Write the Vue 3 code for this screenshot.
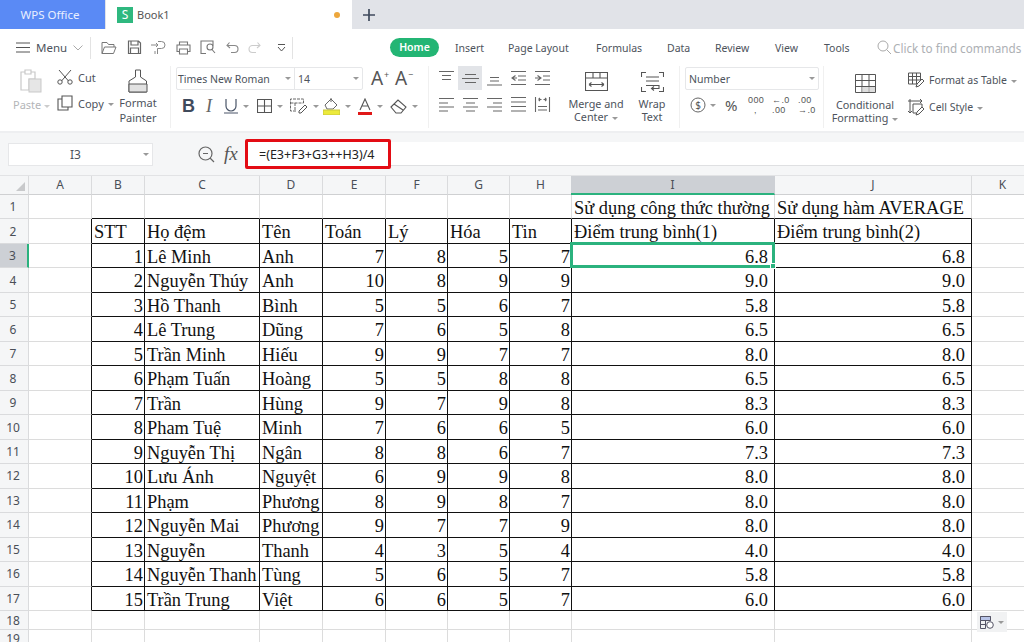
<script setup>
const columns = ['A','B','C','D','E','F','G','H','I','J','K']
const people = [
  ['1','Lê Minh','Anh','7','8','5','7','6.8'],
  ['2','Nguyễn Thúy','Anh','10','8','9','9','9.0'],
  ['3','Hồ Thanh','Bình','5','5','6','7','5.8'],
  ['4','Lê Trung','Dũng','7','6','5','8','6.5'],
  ['5','Trần Minh','Hiếu','9','9','7','7','8.0'],
  ['6','Phạm Tuấn','Hoàng','5','5','8','8','6.5'],
  ['7','Trần','Hùng','9','7','9','8','8.3'],
  ['8','Pham Tuệ','Minh','7','6','6','5','6.0'],
  ['9','Nguyễn Thị','Ngân','8','8','6','7','7.3'],
  ['10','Lưu Ánh','Nguyệt','6','9','9','8','8.0'],
  ['11','Phạm','Phương','8','9','8','7','8.0'],
  ['12','Nguyễn Mai','Phương','9','7','7','9','8.0'],
  ['13','Nguyễn','Thanh','4','3','5','4','4.0'],
  ['14','Nguyễn Thanh','Tùng','5','6','5','7','5.8'],
  ['15','Trần Trung','Việt','6','6','5','7','6.0']
]
const textLeft = new Set([1, 2])

const sheetRows = []
sheetRows.push({ n: 1, cells: ['', '', '', '', '', '', '', '', 'Sử dụng công thức thường', 'Sử dụng hàm AVERAGE', ''].map((t) => ({ t, left: true })), top: true })
sheetRows.push({ n: 2, cells: ['', 'STT', 'Họ đệm', 'Tên', 'Toán', 'Lý', 'Hóa', 'Tin', 'Điểm trung bình(1)', 'Điểm trung bình(2)', ''].map((t) => ({ t, left: true })) })
people.forEach((p, i) => {
  const cells = [{ t: '', left: true }]
  p.forEach((t, j) => cells.push({ t, left: textLeft.has(j) }))
  cells.push({ t: p[7], left: false })
  cells.push({ t: '', left: true })
  sheetRows.push({ n: i + 3, cells })
})
sheetRows.push({ n: 18, cells: columns.map(() => ({ t: '', left: true })) })
sheetRows.push({ n: 19, cells: columns.map(() => ({ t: '', left: true })) })

function cellClass(r, c) {
  const inCol = c >= 1 && c <= 9
  return {
    left: r.cells[c].left,
    right: !r.cells[c].left,
    dec: !r.cells[c].left && c >= 8,
    bR: r.n >= 2 && r.n <= 17 && c >= 0 && c <= 9,
    bB: r.n >= 1 && r.n <= 17 && inCol
  }
}

const alignIcons = [
  'M1 1.5h15M4 5.5h9M4 9.5h9',
  'M3 4.5h11M0 8.5h17M3 12.5h11',
  'M4 7.5h9M4 11h9M1 15h15',
  'M1 1.5h15M8 6h8M8 10h8M1 14.5h15M5.500 5.500L2 8l3.500 2.500M2 8h5',
  'M1 1.500h15M9 6h7M9 10h7M1 14.500h15M3.500 5.500L7 8l-3.500 2.500M1 8h6',
  'M1 2.500h15M1 7h9M1 11h15M1 15h9',
  'M1 2.500h15M4 7h9M1 11h15M4 15h9',
  'M1 2.500h15M7 7h9M1 11h15M7 15h9',
  'M1 1.500h15M1 6h15M1 10.500h15M1 15h15',
  'M1.500 1v15M15.500 1v15M4 10.500h9M4 14h9M4.500 3.500h3M4.500 3.500l1.500-1.500M4.500 3.500l1.500 1.500M12.500 3.500h-3M12.500 3.500L11 2M12.500 3.500L11 5'
]
</script>

<template>
  <div class="app">
    <header class="titlebar">
      <div class="wps">WPS Office</div>
      <div class="book">
        <span class="s-logo">S</span>
        <span class="book-name">Book1</span>
        <span class="dot"></span>
      </div>
      <div class="plus">
        <svg width="14" height="14" viewBox="0 0 14 14"><path d="M7 1v12M1 7h12" stroke="#3f4a5c" stroke-width="1.700" /></svg>
      </div>
    </header>

    <div class="quickrow">
      <svg class="burger" width="14" height="11" viewBox="0 0 14 11"><path d="M0 1h14M0 5.500h14M0 10h14" stroke="#555" stroke-width="1" /></svg>
      <span class="menu-label">Menu</span>
      <svg class="menu-chev" width="10" height="6" viewBox="0 0 10 6"><path d="M.5.500L5 5 9.500.500" fill="none" stroke="#aaa" /></svg>
      <i class="vsep first"></i>
      <div class="quick">
        <svg width="16" height="14" viewBox="0 0 16 14"><path d="M1 12.500V1.500h5l1.500 2H13V6M1 12.500h11.500L15 6H3.500L1 12.500z" fill="none" stroke="#777" /></svg>
        <svg width="15" height="15" viewBox="0 0 15 15"><path d="M1.500 1h10l2 2v10.500h-12zM4 1v4h7V1M3.500 13.500V8h8v5.500" fill="none" stroke="#666" stroke-width="1.200" /></svg>
        <svg width="15" height="15" viewBox="0 0 15 15"><path d="M0 5h7M5 3l2 2-2 2M7 1.500h3.500a3.500 3.500 0 0 1 0 7H6.500V14M4 11v3" fill="none" stroke="#888" /></svg>
        <svg width="15" height="14" viewBox="0 0 15 14"><path d="M3.500 4V1h8v3M3.500 10.500H1V4h13v6.500h-2.500M3.500 8h8v5h-8z" fill="none" stroke="#777" stroke-width="1.100" /></svg>
        <svg width="16" height="15" viewBox="0 0 16 15"><path d="M6 13.500H1V1h12v5M7 7a3 3 0 1 0 6 0 3 3 0 0 0-6 0M12 9.500l3 3.500" fill="none" stroke="#777" stroke-width="1.100" /></svg>
        <svg width="13" height="12" viewBox="0 0 13 12"><path d="M3.500.500L1 3.500l3 2.500M1.500 3.500h7a3.500 3.500 0 0 1 0 7H5" fill="none" stroke="#888" stroke-width="1.100" /></svg>
        <svg width="13" height="12" viewBox="0 0 13 12"><path d="M9.500.500L12 3.500 9 6M11.500 3.500h-7a3.500 3.500 0 0 0 0 7H8" fill="none" stroke="#ccc" stroke-width="1.100" /></svg>
        <svg class="more" width="9" height="8" viewBox="0 0 9 8"><path d="M1 .500h7M1 3l3.500 4L8 3" fill="none" stroke="#555" /></svg>
      </div>
      <i class="vsep second"></i>
      <nav class="tabs">
        <span class="home">Home</span>
        <span class="tab w53">Insert</span>
        <span class="tab w88">Page Layout</span>
        <span class="tab w71">Formulas</span>
        <span class="tab w48">Data</span>
        <span class="tab w60">Review</span>
        <span class="tab w49">View</span>
        <span class="tab w53">Tools</span>
      </nav>
      <div class="find">
        <svg width="15" height="15" viewBox="0 0 15 15"><circle cx="6" cy="6" r="5" fill="none" stroke="#aaa" /><path d="M9.500 9.500L14 14" stroke="#aaa" /></svg>
        <span>Click to find commands</span>
      </div>
    </div>

    <section class="ribbon">
      <div class="group g-clip">
        <div class="paste">
          <svg width="22" height="24" viewBox="0 0 22 24"><path d="M5 3H1v18h8V10h6V3h-4M5 1h6v4H5z" fill="none" stroke="#c9c9c9" stroke-width="1.200" /><rect x="9" y="10" width="12" height="13" fill="#e6e6e6" stroke="#c9c9c9" /></svg>
          <span class="paste-label">Paste<b class="caret"></b></span>
        </div>
        <div class="cutcopy">
          <div class="cc-item">
            <svg width="16" height="16" viewBox="0 0 16 16"><path d="M2 1l9.500 11M14 1L4.500 12" fill="none" stroke="#555" /><circle cx="3" cy="13" r="2.200" fill="none" stroke="#555" /><circle cx="13" cy="13" r="2.200" fill="none" stroke="#555" /></svg>
            <span>Cut</span>
          </div>
          <div class="cc-item">
            <svg width="16" height="16" viewBox="0 0 16 16"><path d="M5 1h10v11H5zM5 4H1v11h10v-3" fill="none" stroke="#555" stroke-width="1.100" /></svg>
            <span>Copy<b class="caret"></b></span>
          </div>
        </div>
        <div class="painter">
          <svg width="20" height="24" viewBox="0 0 20 24"><path d="M7.500 1h5v7l6 4v11H1V12l6.500-4z" fill="#fff" stroke="#555" /><path d="M1 15h18v8H1z" fill="#e2e2e2" stroke="#555" /></svg>
          <span>Format<br />Painter</span>
        </div>
      </div>
      <i class="ribsep"></i>

      <div class="group g-font">
        <div class="font-top">
          <div class="fontbox">
            <div class="fname">Times New Roman<b class="caret"></b></div>
            <div class="fsize">14<b class="caret"></b></div>
          </div>
          <div class="asize">A<sup>+</sup></div>
          <div class="asize">A<sup>−</sup></div>
        </div>
        <div class="font-bottom">
          <span class="fi w25 bold">B</span>
          <span class="fi w22 ital">I</span>
          <span class="fi w33">
            <svg width="14" height="15" viewBox="0 0 14 15"><path d="M2 0v7a5 5 0 0 0 10 0V0M0 14h14" fill="none" stroke="#4a5568" stroke-width="1.200" /></svg><b class="caret"></b>
          </span>
          <span class="fi w33">
            <svg width="15" height="14" viewBox="0 0 15 14"><path d="M.500.500h14v13H.500zM7.500.500v13M.500 7h14" fill="none" stroke="#555" stroke-width="1.100" /></svg><b class="caret"></b>
          </span>
          <span class="fi w33">
            <svg width="18" height="16" viewBox="0 0 18 16"><path d="M6 13H.500V1h13v4M.500 5h13M5 5v8" fill="none" stroke="#666" stroke-dasharray="3 1" /><path d="M9 13l6-6 2 2-6 6H9z" fill="none" stroke="#555" /></svg><b class="caret"></b>
          </span>
          <span class="fi w35">
            <svg width="17" height="18" viewBox="0 0 17 18"><path d="M2 8l6-6 6 6-4 4H4zM8 1v4" fill="none" stroke="#666" /><rect x="0" y="13" width="17" height="5" fill="#ecea3c" stroke="#c9c73a" /></svg><b class="caret"></b>
          </span>
          <span class="fi w32">
            <svg width="14" height="17" viewBox="0 0 14 17"><path d="M2 12L7 1l5 11M4 8h6" fill="none" stroke="#555" stroke-width="1.100" /><rect x="0" y="14" width="14" height="3" fill="#e01818" /></svg><b class="caret"></b>
          </span>
          <span class="fi w32">
            <svg width="17" height="15" viewBox="0 0 17 15"><path d="M1 8l7-7 8 7-5 6H6zM4 5l9 6" fill="none" stroke="#555" stroke-width="1.100" /></svg><b class="caret"></b>
          </span>
        </div>
      </div>
      <i class="ribsep"></i>

      <div class="group g-align">
        <div class="align-grid">
          <span v-for="(d, i) in alignIcons" :key="i" class="al" :class="{ on: i === 1 }">
            <svg width="17" height="17" viewBox="0 0 17 17"><path :d="d" fill="none" stroke="#666" stroke-width="1.100" /></svg>
          </span>
        </div>
        <div class="bigbtn merge">
          <svg width="23" height="20" viewBox="0 0 23 20"><path d="M.500.500h22v18H.500zM.500 6h22M8 .500V6M15 .500V6M4 12.500h15M4 12.500l2.500-2M4 12.500l2.500 2M19 12.500l-2.500-2M19 12.500l-2.500 2" fill="none" stroke="#555" stroke-width="1.100" /></svg>
          <span>Merge and<br />Center<b class="caret"></b></span>
        </div>
        <div class="bigbtn wrap">
          <svg width="23" height="20" viewBox="0 0 23 20"><path d="M5 .500H.500V5M18 .500h4.500V5M.500 15v4.500H5M22.500 15v4.500H18M5 5h13M5 9h13M5 13.500h13v3h-7M13 14.500l-2.500 2 2.500 2" fill="none" stroke="#555" stroke-width="1.100" /></svg>
          <span>Wrap<br />Text</span>
        </div>
      </div>
      <i class="ribsep"></i>

      <div class="group g-num">
        <div class="numbox">Number<b class="caret"></b></div>
        <div class="num-row">
          <span class="ni n1">
            <svg width="16" height="16" viewBox="0 0 16 16"><circle cx="8" cy="8" r="7" fill="none" stroke="#666" /><text x="8" y="11.500" text-anchor="middle" class="dollar">$</text></svg><b class="caret"></b>
          </span>
          <span class="ni n2 pct">%</span>
          <span class="ni n3 stack"><em>000</em><em class="comma">,</em></span>
          <span class="ni n4 stack"><em>←.0</em><em>.00</em></span>
          <span class="ni n5 stack"><em>.00</em><em>→.0</em></span>
        </div>
      </div>
      <i class="ribsep"></i>

      <div class="group g-styles">
        <div class="bigbtn cond">
          <svg width="21" height="19" viewBox="0 0 21 19"><path d="M.500.500h20v18H.500zM.500 6.500h20M.500 12.500h20M7 .500v18M14 .500v18" fill="none" stroke="#555" /><rect x="7.500" y="13" width="6" height="5" fill="#ddd" /><rect x="14.500" y="13" width="5.500" height="5" fill="#ddd" /></svg>
          <span>Conditional<br />Formatting<b class="caret"></b></span>
        </div>
        <div class="stylecol">
          <div class="st-item">
            <svg width="17" height="17" viewBox="0 0 17 17"><path d="M.500 1h12v11H.500zM.500 4.500h12M.500 8h12M4.500 1v11M8.500 1v11" fill="none" stroke="#555" /><path d="M8 15l1-3 5-5 2 2-5 5z" fill="#fff" stroke="#555" /></svg>
            <span>Format as Table<b class="caret"></b></span>
          </div>
          <div class="st-item">
            <svg width="17" height="17" viewBox="0 0 17 17"><path d="M0 2h14M12 0l2 2-2 2M2 0v14M0 12l2 2 2-2M5 5h9v4M5 5v9h3" fill="none" stroke="#555" /><path d="M8 16l1-3 5-5 2 2-5 5z" fill="#fff" stroke="#555" /></svg>
            <span>Cell Style<b class="caret"></b></span>
          </div>
        </div>
      </div>
    </section>

    <div class="formulabar">
      <div class="namebox">I3<b class="caret"></b></div>
      <svg class="fx-zoom" width="17" height="17" viewBox="0 0 17 17"><circle cx="7.500" cy="7.500" r="6.500" fill="none" stroke="#666" stroke-width="1.200" /><path d="M5 7.500h5M12 12l4 4" stroke="#666" stroke-width="1.200" /></svg>
      <span class="fx">fx</span>
      <div class="formula">
        <div class="redbox">=(E3+F3+G3++H3)/4</div>
      </div>
    </div>

    <main class="sheet">
      <div class="hd corner"><i class="tri"></i></div>
      <div v-for="c in columns" :key="c" class="hd" :class="{ sel: c === 'I' }">{{ c }}</div>
      <template v-for="r in sheetRows" :key="r.n">
        <div class="rh" :class="{ sel: r.n === 3 }">{{ r.n }}</div>
        <div v-for="(cell, ci) in r.cells" :key="ci" class="cell" :class="cellClass(r, ci)">
          {{ cell.t }}
          <div v-if="r.n === 3 && ci === 8" class="selection"><i class="handle"></i></div>
        </div>
      </template>
      <div class="paste-opt">
        <svg width="14" height="13" viewBox="0 0 14 13"><path d="M.500.500h10v4M.500 4.500h10M.500 8.500h5M.500.500v12h5M5.500.500v12" fill="none" stroke="#556" /><path d="M.500.500h10v4H.500z" fill="#b8c4e8" stroke="#556" /><circle cx="10" cy="9" r="3.300" fill="#fff" stroke="#556" /></svg>
        <b class="caret"></b>
      </div>
    </main>
  </div>
</template>

<style>
html, body { margin: 0; padding: 0; background: #fff; overflow: hidden; }
</style>

<style scoped>
.app {
  width: 1024px;
  height: 642px;
  overflow: hidden;
  display: flex;
  flex-direction: column;
  font-family: "Noto Sans", "Open Sans", sans-serif;
  font-size: 11px;
  color: #4d535c;
}
.caret {
  display: inline-block;
  width: 0;
  height: 0;
  margin-left: 4px;
  border-left: 3px solid transparent;
  border-right: 3px solid transparent;
  border-top: 3px solid #999;
  vertical-align: middle;
}

/* Title bar */
.titlebar { height: 29px; display: flex; background: #e1e3e8; flex: none; }
.wps {
  width: 105px;
  background: #5a8af5;
  color: #e8efff;
  font-size: 11.500px;
  line-height: 30px;
  text-align: center;
  padding-right: 5px;
  box-sizing: border-box;
}
.book {
  width: 246px;
  margin-left: 1px;
  background: #fff;
  display: flex;
  align-items: center;
  padding-left: 11px;
  box-sizing: border-box;
  position: relative;
}
.s-logo {
  width: 16px;
  height: 16px;
  background: #2fb87f;
  color: #fff;
  font-size: 12px;
  line-height: 16px;
  text-align: center;
}
.book-name { margin-left: 4px; font-size: 11px; color: #555; }
.dot {
  margin-left: auto;
  margin-right: 12px;
  width: 6px;
  height: 6px;
  border-radius: 50%;
  background: #eda73c;
}
.plus { width: 35px; display: flex; align-items: center; justify-content: center; padding-right: 2px; box-sizing: border-box; }

/* Quick row */
.quickrow { height: 37px; flex: none; display: flex; align-items: center; background: #fff; position: relative; }
.quickrow > * { flex: none; }
.burger { margin-left: 16px; }
.menu-label { margin-left: 6px; font-size: 11.500px; width: 31px; }
.menu-chev { margin-left: 6px; }
.vsep { width: 1px; height: 22px; background: #e3e3e3; }
.vsep.first { margin-left: 7px; }
.quick { width: 201px; display: flex; align-items: center; gap: 9.500px; padding-left: 10px; box-sizing: border-box; }
.more { margin-left: 6px; }
.vsep.second { margin-right: 97px; }
.tabs { display: flex; align-items: center; }
.tabs > * { flex: none; }
.home {
  width: 49px;
  height: 19px;
  border-radius: 10px;
  background: #23b574;
  color: #fff;
  font-weight: 600;
  font-size: 10.500px;
  line-height: 19px;
  text-align: center;
  margin-right: 16px;
}
.tab { font-size: 10.500px; color: #4d535c; white-space: nowrap; }
.w53 { width: 53px; }
.w88 { width: 88px; }
.w71 { width: 71px; }
.w48 { width: 48px; }
.w60 { width: 60px; }
.w49 { width: 49px; }
.find { display: flex; align-items: center; color: #adb0b4; font-size: 11.700px; white-space: nowrap; }
.find span { margin-left: 1px; }

/* Ribbon */
.ribbon {
  flex: none;
  display: flex;
  background: #fff;
  border-bottom: 2px solid #eeeff1;
  box-sizing: content-box;
  height: 65px;
}
.group { display: flex; height: 65px; box-sizing: border-box; flex: none; }
.ribsep { width: 1px; background: #f0f0f0; height: 62px; flex: none; }

.g-clip { width: 170px; }
.paste { width: 44px; padding-left: 13px; box-sizing: border-box; display: flex; flex-direction: column; align-items: flex-start; }
.paste svg { margin: 3px 0 0 7px; }
.paste-label { color: #b3b5b8; margin-top: 5px; white-space: nowrap; font-size: 11px; line-height: 14px; }
.paste-label .caret { margin-left: 3px; border-top-color: #ccc; }
.cutcopy { width: 76px; padding-left: 13px; box-sizing: border-box; }
.cc-item { display: flex; align-items: center; gap: 5px; height: 20px; margin-top: 1px; font-size: 11px; white-space: nowrap; }
.cc-item + .cc-item { margin-top: 6px; }
.painter { width: 50px; display: flex; flex-direction: column; align-items: center; margin-left: -7px; text-align: center; line-height: 15px; font-size: 11px; }
.painter svg { margin: 3px 0 2px; }

.g-font { width: 257px; padding-left: 5px; flex-direction: column; }
.font-top { display: flex; align-items: center; height: 23px; margin-top: 1px; }
.fontbox { width: 187px; height: 23px; display: flex; border: 1px solid #e6e7e9; border-radius: 2px; box-sizing: border-box; font-size: 10.500px; }
.fname { width: 118px; border-right: 1px solid #e6e7e9; display: flex; align-items: center; justify-content: space-between; padding: 0 3px 0 1px; box-sizing: border-box; }
.fsize { flex: 1; display: flex; align-items: center; justify-content: space-between; padding: 0 3px; box-sizing: border-box; }
.asize { width: 24px; font-size: 19px; line-height: 23px; color: #555; padding-left: 8px; box-sizing: border-box; position: relative; white-space: nowrap; }
.asize sup { position: absolute; left: 21px; top: 3px; font-size: 9px; line-height: 9px; vertical-align: baseline; }
.font-bottom { display: flex; align-items: center; height: 22px; margin-top: 5px; padding-left: 0; }
.fi { display: flex; align-items: center; height: 22px; }
.fi svg { flex: none; }
.fi .caret { margin-left: 5px; }
.w25 { width: 25px; padding-left: 6px; box-sizing: border-box; }
.w22 { width: 22px; padding-left: 5px; box-sizing: border-box; }
.w33 { width: 33px; padding-left: 1px; box-sizing: border-box; }
.w35 { width: 35px; padding-left: 1px; box-sizing: border-box; }
.w32 { width: 32px; padding-left: 1px; box-sizing: border-box; }
.bold { font-family: "Liberation Sans", sans-serif; font-weight: 700; font-size: 18px; color: #3f4a5c; }
.ital { font-family: "Liberation Serif", serif; font-style: italic; font-size: 18px; color: #666; }

.g-align { width: 250px; padding-left: 5px; box-sizing: border-box; }
.align-grid { display: grid; grid-template-columns: repeat(5, 24px); grid-template-rows: 24px 24px; row-gap: 2px; width: 122px; }
.al { display: flex; align-items: center; justify-content: center; }
.al.on { background: #e2e4e8; }
.bigbtn { display: flex; flex-direction: column; align-items: center; text-align: center; line-height: 13px; font-size: 10.800px; white-space: nowrap; }
.merge { width: 70px; margin-left: 5px; }
.merge svg { margin: 6px 0 5px; }
.wrap { width: 42px; margin-left: 0; }
.wrap svg { margin: 6px 0 5px; }

.g-num { width: 143px; padding-left: 5px; box-sizing: border-box; flex-direction: column; }
.numbox { width: 134px; height: 23px; margin-top: 1px; border: 1px solid #e6e7e9; border-radius: 2px; box-sizing: border-box; display: flex; align-items: center; justify-content: space-between; padding: 0 3px; font-size: 10.500px; }
.num-row { display: flex; align-items: center; height: 22px; margin-top: 4px; }
.ni { display: flex; align-items: center; flex: none; }
.n1 { width: 40px; padding-left: 5px; box-sizing: border-box; }
.n2 { width: 23px; }
.n3 { width: 24px; }
.n4 { width: 26px; }
.n5 { width: 24px; }
.pct { font-size: 15px; color: #555; }
.dollar { font-size: 10px; fill: #555; font-family: "Noto Sans", sans-serif; }
.stack { flex-direction: column; align-items: flex-start; font-family: "Liberation Sans", sans-serif; font-size: 9px; line-height: 10.400px; letter-spacing: .4px; color: #555; }
.stack em { font-style: normal; }
.stack .comma { padding-left: 6px; }

.g-styles { flex: 1; }
.cond { width: 74px; margin-left: 4px; }
.cond svg { margin: 8px 0 5px; }
.stylecol { margin-left: 6px; }
.st-item { display: flex; align-items: center; gap: 4px; height: 20px; margin-top: 4px; font-size: 10.500px; white-space: nowrap; }
.st-item + .st-item { margin-top: 7px; }

/* Formula bar */
.formulabar {
  height: 43px;
  flex: none;
  background: #f5f6f7;
  display: flex;
  align-items: center;
  box-sizing: border-box;
  border-bottom: 1px solid #e2e3e5;
}
.namebox {
  width: 145px;
  height: 23px;
  margin-left: 8px;
  padding-right: 10px;
  background: #fff;
  border: 1px solid #e6e7e9;
  box-sizing: border-box;
  text-align: center;
  font-size: 12px;
  line-height: 21px;
  position: relative;
}
.namebox .caret { position: absolute; right: 3px; top: 9px; }
.fx-zoom { margin-left: 45px; }
.fx { width: 30px; margin-left: 9px; font-family: "Liberation Serif", serif; font-style: italic; font-size: 19px; color: #555; }
.formula { flex: 1; height: 23px; margin-left: -9px; background: #fff; border-bottom: 1px solid #dfe0e2; position: relative; }
.redbox {
  position: absolute;
  left: 0;
  top: -3px;
  width: 146px;
  height: 30px;
  box-sizing: border-box;
  border: 3px solid #e30c14;
  border-radius: 2px;
  background: #fff;
  color: #222;
  font-size: 12.500px;
  line-height: 26px;
  padding-left: 11px;
}

/* Sheet */
.sheet {
  flex: 1;
  display: grid;
  grid-template-columns: 29px 63px 53px 115px 63px 63px 62px 62px 62px 203px 197px 62px;
  grid-template-rows: 19px 24px 25px repeat(15, 24.470px) 19px 1fr;
  position: relative;
  overflow: hidden;
  background: #fff;
}
.hd {
  background: #f5f6f7;
  border-right: 1px solid #dadbdd;
  border-bottom: 1px solid #cfd0d2;
  text-align: center;
  font-size: 12px;
  line-height: 18px;
  color: #4a4f57;
  box-sizing: border-box;
}
.hd.sel { background: #cdd0d5; border-bottom: 2px solid #2bb27e; border-right-color: #cdd0d5; margin-left: -1px; }
.corner { position: relative; }
.tri {
  position: absolute;
  right: 3px;
  bottom: 3px;
  width: 0;
  height: 0;
  border-left: 9px solid transparent;
  border-bottom: 9px solid #c8c9cb;
}
.rh {
  background: #f5f6f7;
  border-right: 1px solid #dadbdd;
  border-bottom: 1px solid #dadbdd;
  font-size: 12px;
  color: #4a4f57;
  text-align: center;
  display: flex;
  align-items: center;
  justify-content: center;
  box-sizing: border-box;
  padding-right: 2px;
}
.rh.sel { background: #cdd0d5; border-right: 2px solid #2bb27e; }
.cell {
  font-family: "Liberation Serif", "Times New Roman", serif;
  font-size: 18.400px;
  line-height: 26px;
  color: #111;
  border-right: 1px solid #dcdcdc;
  border-bottom: 1px solid #dcdcdc;
  box-sizing: border-box;
  white-space: nowrap;
  position: relative;
  min-width: 0;
}
.cell.left { text-align: left; padding-left: 2px; overflow: visible; }
.cell.right { text-align: right; padding-right: 1px; }
.cell.dec { padding-right: 6px; }
.cell.bR { border-right-color: #111; }
.cell.bB { border-bottom-color: #111; }
.selection {
  position: absolute;
  left: -2px;
  top: -2px;
  right: -1px;
  bottom: -1px;
  border: 3px solid #2bb27e;
  box-sizing: border-box;
  z-index: 2;
  pointer-events: none;
}
.handle {
  position: absolute;
  right: -4px;
  bottom: -4px;
  width: 6px;
  height: 6px;
  background: #2bb27e;
  border: 1px solid #fff;
  box-sizing: border-box;
}
.paste-opt {
  position: absolute;
  left: 977px;
  top: 436px;
  width: 30px;
  height: 20px;
  background: #f1f2f3;
  display: flex;
  align-items: center;
  padding-left: 3px;
  box-sizing: border-box;
  z-index: 3;
}
</style>
